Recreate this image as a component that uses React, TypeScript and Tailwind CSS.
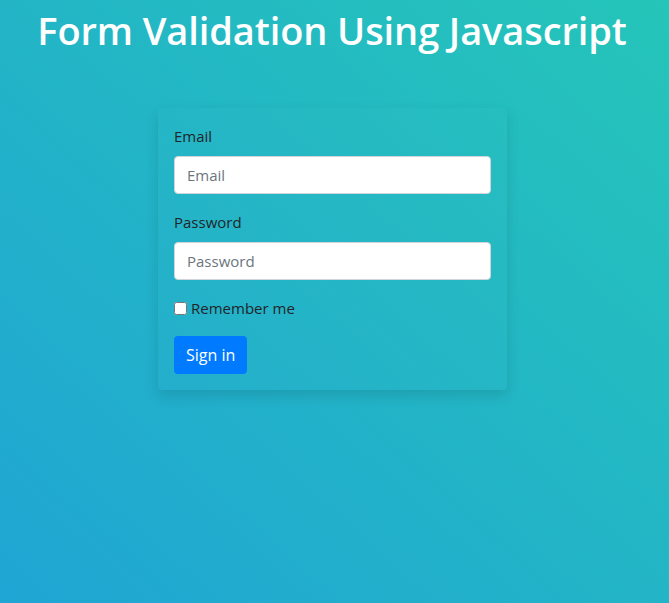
import React from "react";

export default function App() {
  const font = { fontFamily: '"Open Sans", "Noto Sans", sans-serif' };
  return (
    <div
      className="w-[669px] h-[603px] bg-[linear-gradient(to_top_right,#20a5d4,#25c5b9)] overflow-hidden text-[#212529]"
      style={font}
    >
      <h1 className="text-white text-center text-[38px] font-semibold leading-[48px] pt-[6px] tracking-[-0.1px] pr-[5px]">
        Form Validation Using Javascript
      </h1>
      <div className="mt-[54px] ml-[158px] w-[349px] rounded-[4px] p-4 shadow-[0_6px_14px_rgba(0,0,0,0.12)] bg-[rgba(255,255,255,0.01)]">
        <div className="mb-4">
          <label className="block text-[15px] leading-6 mb-2">Email</label>
          <input
            type="email"
            placeholder="Email"
            className="w-full h-[38px] bg-white border border-[#ced4da] rounded-[4px] px-3 text-[15px] placeholder:text-[#6c757d] outline-none"
          />
        </div>
        <div className="mb-4">
          <label className="block text-[15px] leading-6 mb-2">Password</label>
          <input
            type="password"
            placeholder="Password"
            className="w-full h-[38px] bg-white border border-[#ced4da] rounded-[4px] px-3 text-[15px] placeholder:text-[#6c757d] outline-none"
          />
        </div>
        <div className="mb-4 flex items-center h-6">
          <input type="checkbox" className="w-[13px] h-[13px] m-0 mr-[4px]" />
          <span className="text-[15px] leading-6">Remember me</span>
        </div>
        <button className="h-[38px] px-3 rounded-[4px] bg-[#007bff] text-white text-[16px]">
          Sign in
        </button>
      </div>
    </div>
  );
}
